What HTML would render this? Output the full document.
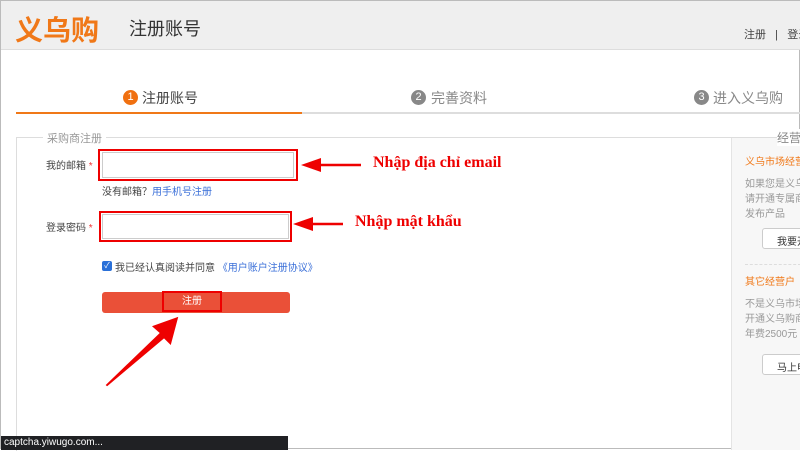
<!DOCTYPE html>
<html><head><meta charset="utf-8"><style>
*{margin:0;padding:0;box-sizing:border-box}
body{width:800px;height:449px;overflow:hidden;background:#fff;font-family:"Liberation Sans","Noto Sans CJK SC",sans-serif;position:relative;border:1px solid #bbb}
.a{position:absolute;white-space:nowrap}
</style></head><body>
<div class="a" style="left:0;top:0;width:800px;height:49px;background:#efefef;border-bottom:1px solid #ddd"></div>
<div class="a" style="left:14px;top:8px;font-size:28px;font-weight:bold;color:#f07818;letter-spacing:0">义乌购</div>
<div class="a" style="left:128px;top:14px;font-size:18px;color:#333">注册账号</div>
<div class="a" style="left:743px;top:25px;font-size:11px;color:#444">注册 &nbsp; | &nbsp; 登录</div>

<div class="a" style="left:122px;top:89px;width:15px;height:15px;border-radius:50%;background:#f07010;color:#fff;font-size:11px;text-align:center;line-height:15px">1</div>
<div class="a" style="left:141px;top:87px;font-size:14px;color:#444">注册账号</div>
<div class="a" style="left:410px;top:89px;width:15px;height:15px;border-radius:50%;background:#888;color:#fff;font-size:11px;text-align:center;line-height:15px">2</div>
<div class="a" style="left:430px;top:87px;font-size:14px;color:#888">完善资料</div>
<div class="a" style="left:693px;top:89px;width:15px;height:15px;border-radius:50%;background:#888;color:#fff;font-size:11px;text-align:center;line-height:15px">3</div>
<div class="a" style="left:712px;top:87px;font-size:14px;color:#888">进入义乌购</div>
<div class="a" style="left:15px;top:111px;width:785px;height:2px;background:#ddd"></div>
<div class="a" style="left:15px;top:111px;width:286px;height:2px;background:#f07818"></div>

<div class="a" style="left:15px;top:136px;width:785px;height:314px;border-top:1px solid #ddd;border-left:1px solid #ddd"></div>
<div class="a" style="left:42px;top:129px;background:#fff;padding:0 4px;font-size:11px;color:#999">采购商注册</div>
<div class="a" style="left:730px;top:137px;width:70px;height:312px;background:#f7f7f7;border-left:1px solid #e4e4e4"></div>
<div class="a" style="left:776px;top:128px;font-size:12px;color:#888;background:#fff">经营</div>
<div class="a" style="left:744px;top:152px;font-size:10px;color:#f07818">义乌市场经营</div>
<div class="a" style="left:744px;top:176px;font-size:10px;color:#999;line-height:15px">如果您是义乌<br>请开通专属商<br>发布产品</div>
<div class="a" style="left:761px;top:227px;width:50px;height:21px;border:1px solid #ccc;border-radius:3px;background:#fff;font-size:10px;color:#333;padding:4px 0 0 14px">我要开</div>
<div class="a" style="left:744px;top:263px;width:56px;border-top:1px dashed #ddd"></div>
<div class="a" style="left:744px;top:272px;font-size:10px;color:#f07818">其它经营户</div>
<div class="a" style="left:744px;top:296px;font-size:10px;color:#999;line-height:15px">不是义乌市场<br>开通义乌购商<br>年费2500元</div>
<div class="a" style="left:761px;top:353px;width:50px;height:21px;border:1px solid #ccc;border-radius:3px;background:#fff;font-size:10px;color:#333;padding:4px 0 0 14px">马上申</div>

<div class="a" style="left:45px;top:156px;font-size:10px;color:#444">我的邮箱 <span style="color:#e33">*</span></div>
<div class="a" style="left:97px;top:148px;width:200px;height:32px;border:2px solid #e00"></div>
<div class="a" style="left:101px;top:151px;width:192px;height:26px;border:1px solid #ccc"></div>
<div class="a" style="left:101px;top:182px;font-size:10px;color:#444">没有邮箱？<span style="color:#3a6fd8">用手机号注册</span></div>
<div class="a" style="left:45px;top:218px;font-size:10px;color:#444">登录密码 <span style="color:#e33">*</span></div>
<div class="a" style="left:98px;top:210px;width:193px;height:31px;border:2px solid #e00"></div>
<div class="a" style="left:101px;top:213px;width:187px;height:25px;border:1px solid #ccc"></div>
<div class="a" style="left:101px;top:260px;width:10px;height:10px;background:#2a70d8;border-radius:2px;color:#fff;font-size:8px;line-height:10px;text-align:center">✓</div>
<div class="a" style="left:114px;top:258px;font-size:10px;color:#444">我已经认真阅读并同意 <span style="color:#3a6fd8">《用户账户注册协议》</span></div>
<div class="a" style="left:101px;top:291px;width:188px;height:21px;background:#ea5038;border-radius:3px"></div>
<div class="a" style="left:161px;top:290px;width:60px;height:21px;border:2px solid #e00;color:#fff;font-size:10px;text-align:center;line-height:17px">注册</div>

<div class="a" style="left:372px;top:153px;font-family:'Liberation Serif',serif;font-weight:bold;font-size:16px;color:#e00">Nhập địa chỉ email</div>
<div class="a" style="left:354px;top:212px;font-family:'Liberation Serif',serif;font-weight:bold;font-size:16px;color:#e00">Nhập mật khẩu</div>
<svg class="a" style="left:0;top:0" width="800" height="449">
<g fill="#e00" stroke="#e00">
<line x1="318" y1="164" x2="360" y2="164" stroke-width="2.5"/>
<polygon points="300,164 320,157 320,171" stroke="none"/>
<line x1="310" y1="223" x2="342" y2="223" stroke-width="2.5"/>
<polygon points="292,223 312,216 312,230" stroke="none"/>
<polygon points="178,315 170,345 163,338 106,386 104,384 158,332 150,325" stroke="#fff" stroke-width="1"/>
</g></svg>
<div class="a" style="left:0;top:435px;width:287px;height:14px;background:#202124;color:#fff;font-size:10px;padding-left:3px;line-height:14px">captcha.yiwugo.com...</div>
</body></html>
